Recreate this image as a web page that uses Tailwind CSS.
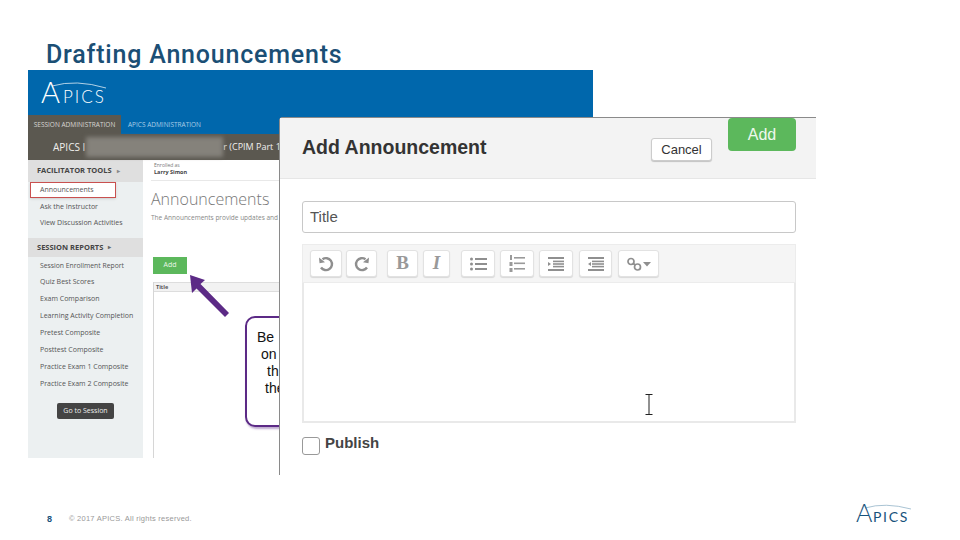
<!DOCTYPE html>
<html lang="en">

<head>
    <meta charset="UTF-8">
    <title>Drafting Announcements</title>
    <script src="https://cdn.jsdelivr.net/npm/@tailwindcss/browser@4"></script>
</head>

<body class="bg-white font-['Liberation_Sans',sans-serif]">
    <div class="relative w-[960px] h-[540px] overflow-hidden bg-white">
        <h1 class="absolute left-[46px] top-[40px] text-[25px] leading-[30px] font-medium tracking-[0.8px] text-[#1b4f75] font-['Roboto',sans-serif] whitespace-nowrap">Drafting Announcements</h1>

        <!-- facilitator page screenshot -->
        <div class="absolute left-[28px] top-[70px] w-[565px] h-[388px] flex flex-col bg-white font-['Open_Sans',sans-serif]">
            <div class="h-[45px] bg-[#0067ac] pl-[12px] pt-[3px] shrink-0">
                <svg width="72" height="40" viewBox="0 0 72 40" class="block">
                    <path d="M12 13 Q36 6 66 15" fill="none" stroke="#ffffff" stroke-width="0.7" />
                    <text x="1" y="30" font-family="Lato" font-weight="300" font-size="29" fill="#ffffff">A</text>
                    <text x="23" y="30" font-family="Lato" font-weight="300" font-size="17" letter-spacing="2" fill="#ffffff">PICS</text>
                </svg>
            </div>
            <div class="h-[19px] bg-[#0067ac] flex items-center shrink-0 text-[6.5px] text-[#c7d9e6]">
                <div class="h-full w-[93px] bg-[#5b5850] flex items-center justify-center text-[#d8d6d2]">SESSION ADMINISTRATION</div>
                <div class="pl-[7px] text-[#a9cde6]">APICS ADMINISTRATION</div>
            </div>
            <div class="h-[26px] bg-[#5b5850] flex items-center pl-[25px] shrink-0 text-[10px] text-[#f0efed]">
                <span>APICS I</span>
                <span class="w-[137px] h-[20px] bg-[#85827b] blur-[2px] ml-[1px]"></span>
                <span class="whitespace-nowrap text-[9px]">r (CPIM Part 1</span>
            </div>
            <div class="flex flex-1 min-h-0">
                <div class="w-[115px] bg-[#ecf0f1] shrink-0 flex flex-col text-[7px] text-[#555]">
                    <div class="h-[22px] bg-[#dfdfdf] flex items-center pl-[9px] text-[7.5px] font-bold text-[#444] whitespace-nowrap">FACILITATOR TOOLS <span class="ml-[5px] text-[6px] text-[#888]">▸</span></div>
                    <div class="mx-[2px] h-[16px] bg-white border border-[#c9504f] shadow-sm flex items-center pl-[9px] w-[86px]">Announcements</div>
                    <div class="h-[17px] flex items-center pl-[12px] pt-[1px]">Ask the Instructor</div>
                    <div class="h-[17px] flex items-center pl-[12px] whitespace-nowrap">View Discussion Activities</div>
                    <div class="h-[19px] mt-[6px] bg-[#dfdfdf] flex items-center pl-[9px] text-[7.5px] font-bold text-[#444] whitespace-nowrap">SESSION REPORTS <span class="ml-[5px] text-[6px] text-[#666]">▸</span></div>
                    <div class="h-[17px] flex items-center pl-[12px] whitespace-nowrap text-[6.8px] pt-[1px]">Session Enrollment Report</div>
                    <div class="h-[17px] flex items-center pl-[12px]">Quiz Best Scores</div>
                    <div class="h-[17px] flex items-center pl-[12px]">Exam Comparison</div>
                    <div class="h-[17px] flex items-center pl-[12px] whitespace-nowrap">Learning Activity Completion</div>
                    <div class="h-[17px] flex items-center pl-[12px]">Pretest Composite</div>
                    <div class="h-[17px] flex items-center pl-[12px]">Posttest Composite</div>
                    <div class="h-[17px] flex items-center pl-[12px] whitespace-nowrap">Practice Exam 1 Composite</div>
                    <div class="h-[17px] flex items-center pl-[12px] whitespace-nowrap">Practice Exam 2 Composite</div>
                    <div class="mt-[10px] ml-[29px] w-[57px] h-[16px] bg-[#444] rounded-[2px] text-[#eee] flex items-center justify-center">Go to Session</div>
                </div>
                <div class="flex-1 flex flex-col pl-[8px] min-w-0">
                    <div class="h-[21px] pt-[2px] border-b border-[#e8e8e8] text-[5px] leading-[7px] text-[#777] pl-[3px]">
                        <div>Enrolled as</div>
                        <div class="font-bold text-[#444] text-[5.5px]">Larry Simon</div>
                    </div>
                    <div class="pt-[8px] text-[16px] leading-[20px] font-light text-[#777]">Announcements</div>
                    <div class="text-[6.5px] leading-[10px] mt-[4px] text-[#888] whitespace-nowrap">The Announcements provide updates and i</div>
                    <div class="mt-[34px] ml-[2px] w-[34px] h-[17px] bg-[#5cb85c] text-[#e9f7e9] text-[7px] flex items-center justify-center">Add</div>
                    <div class="mt-[8px] ml-[2px] flex-1 border-l border-[#d6d6d6]">
                        <div class="h-[10px] bg-[#f2f2f2] border-y border-[#ddd] text-[5.5px] leading-[8px] font-bold text-[#555] pl-[2px]">Title</div>
                    </div>
                </div>
            </div>
        </div>

        <!-- arrow pointing at the Add button -->
        <svg class="absolute left-[185px] top-[270px]" width="50" height="50" viewBox="0 0 50 50">
            <path d="M5 5 L20 10 L15.5 14 L44 43 L40 47 L11.5 18.5 L7 23 Z" fill="#5c2a86" />
        </svg>

        <!-- callout behind the modal -->
        <div class="absolute left-[245px] top-[316px] w-[70px] h-[111px] bg-white border-2 border-[#5c2a86] rounded-[10px] shadow-[1px_2px_2px_rgba(92,42,134,0.4)] pt-[11px] text-[14px] leading-[17px] text-[#111] whitespace-nowrap">
            <div class="pl-[10px]">Be</div>
            <div class="pl-[14px]">on</div>
            <div class="pl-[20px]">th</div>
            <div class="pl-[18px]">the</div>
        </div>

        <!-- add announcement modal -->
        <div class="absolute left-[279px] top-[117px] w-[537px] h-[358px] bg-white border-l border-t border-[#8a8a8a] rounded-tl-[4px] flex flex-col">
            <div class="h-[61px] bg-[#f3f3f3] border-b border-[#e6e6e6] relative shrink-0 flex items-center pl-[22px]">
                <h2 class="text-[19.5px] font-bold text-[#333] whitespace-nowrap">Add Announcement</h2>
                <div class="absolute left-[371px] top-[20px] w-[61px] h-[23px] bg-white border border-[#ccc] rounded-[3px] shadow-[0_1px_1px_rgba(0,0,0,0.2)] text-[13px] text-[#333] flex items-center justify-center">Cancel</div>
                <div class="absolute left-[448px] top-[0px] w-[68px] h-[33px] bg-[#5cb85c] rounded-[4px] text-[16px] text-[#eef8ee] flex items-center justify-center">Add</div>
            </div>
            <div class="pl-[22px] w-[516px] pt-[22px] flex flex-col">
                <div class="h-[32px] border border-[#c8c8c8] rounded-[3px] flex items-center pl-[7px] text-[15px] text-[#555] shrink-0">Title</div>
                <div class="mt-[11px] h-[39px] bg-[#f5f5f5] border border-[#ececec] flex items-center pl-[7px] shrink-0 text-[#999]">
                    <div class="flex gap-[4px]">
                        <div class="w-[32px] h-[27px] bg-white border border-[#e2e2e2] rounded-[3px] shadow-[0_1px_1px_rgba(0,0,0,0.12)] flex items-center justify-center">
                            <svg width="18" height="16" viewBox="0 0 18 16" fill="none" stroke="#8f8f8f" stroke-width="2.4"><path d="M5.5 3.2 A6 6 0 1 1 4 11.5" /><path d="M2 1.5 L2.5 7.2 L8 6.2 Z" fill="#8f8f8f" stroke="none" /></svg>
                        </div>
                        <div class="w-[31px] h-[27px] bg-white border border-[#e2e2e2] rounded-[3px] shadow-[0_1px_1px_rgba(0,0,0,0.12)] flex items-center justify-center">
                            <svg width="18" height="16" viewBox="0 0 18 16" fill="none" stroke="#8f8f8f" stroke-width="2.4"><path d="M12.5 3.2 A6 6 0 1 0 14 11.5" /><path d="M16 1.5 L15.5 7.2 L10 6.2 Z" fill="#8f8f8f" stroke="none" /></svg>
                        </div>
                    </div>
                    <div class="flex gap-[5px] ml-[10px]">
                        <div class="w-[31px] h-[27px] bg-white border border-[#e2e2e2] rounded-[3px] shadow-[0_1px_1px_rgba(0,0,0,0.12)] flex items-center justify-center font-['Liberation_Serif',serif] font-bold text-[19px]">B</div>
                        <div class="w-[27px] h-[27px] bg-white border border-[#e2e2e2] rounded-[3px] shadow-[0_1px_1px_rgba(0,0,0,0.12)] flex items-center justify-center font-['Liberation_Serif',serif] font-bold italic text-[19px]">I</div>
                    </div>
                    <div class="flex gap-[5px] ml-[11px]">
                        <div class="w-[34px] h-[27px] bg-white border border-[#e2e2e2] rounded-[3px] shadow-[0_1px_1px_rgba(0,0,0,0.12)] flex items-center justify-center">
                            <svg width="17" height="14" viewBox="0 0 17 14" fill="#8f8f8f"><circle cx="1.5" cy="2" r="1.5" /><circle cx="1.5" cy="7" r="1.5" /><circle cx="1.5" cy="12" r="1.5" /><rect x="5" y="1" width="12" height="2" /><rect x="5" y="6" width="12" height="2" /><rect x="5" y="11" width="12" height="2" /></svg>
                        </div>
                        <div class="w-[34px] h-[27px] bg-white border border-[#e2e2e2] rounded-[3px] shadow-[0_1px_1px_rgba(0,0,0,0.12)] flex items-center justify-center">
                            <svg width="16" height="18" viewBox="0 0 16 18" fill="#9a9a9a"><rect x="1" y="0" width="2" height="5" /><rect x="0.5" y="7" width="3" height="4" /><rect x="0.5" y="13" width="3" height="4" /><rect x="5" y="2" width="11" height="1.6" /><rect x="5" y="7.5" width="11" height="1.6" /><rect x="5" y="13" width="11" height="1.6" /></svg>
                        </div>
                        <div class="w-[34px] h-[27px] bg-white border border-[#e2e2e2] rounded-[3px] shadow-[0_1px_1px_rgba(0,0,0,0.12)] flex items-center justify-center">
                            <svg width="16" height="14" viewBox="0 0 16 14" fill="#8f8f8f"><rect x="0" y="0" width="16" height="2" /><rect x="5" y="3.6" width="11" height="1.6" /><rect x="5" y="6.2" width="11" height="1.6" /><rect x="5" y="8.8" width="11" height="1.6" /><rect x="0" y="12" width="16" height="2" /><path d="M0 5 L3 7 L0 9 Z" /></svg>
                        </div>
                        <div class="w-[33px] h-[27px] bg-white border border-[#e2e2e2] rounded-[3px] shadow-[0_1px_1px_rgba(0,0,0,0.12)] flex items-center justify-center ml-[1px]">
                            <svg width="16" height="14" viewBox="0 0 16 14" fill="#8f8f8f"><rect x="0" y="0" width="16" height="2" /><rect x="4" y="3.6" width="12" height="1.6" /><rect x="4" y="6.2" width="12" height="1.6" /><rect x="4" y="8.8" width="12" height="1.6" /><rect x="0" y="12" width="16" height="2" /><path d="M3 5 L0 7 L3 9 Z" /></svg>
                        </div>
                    </div>
                    <div class="ml-[6px] w-[41px] h-[27px] bg-white border border-[#e2e2e2] rounded-[3px] shadow-[0_1px_1px_rgba(0,0,0,0.12)] flex items-center justify-center">
                        <svg width="24" height="14" viewBox="0 0 24 14" fill="none" stroke="#8f8f8f" stroke-width="1.7"><circle cx="4" cy="4.5" r="3" /><circle cx="10.5" cy="10" r="3" /><path d="M6.2 6.5 L8.4 8" /><path d="M16 5 L24 5 L20 9.5 Z" fill="#8f8f8f" stroke="none" /></svg>
                    </div>
                </div>
                <div class="h-[140px] border-2 border-t-0 border-[#e9e9e9] shrink-0"></div>
                <label class="mt-[12px] flex items-start gap-[5px]">
                    <span class="mt-[2px] w-[18px] h-[18px] border border-[#999] rounded-[3px] bg-white"></span>
                    <span class="text-[15px] leading-[15px] font-bold text-[#444]">Publish</span>
                </label>
            </div>
        </div>

        <!-- text cursor -->
        <svg class="absolute left-[644px] top-[394px]" width="10" height="21" viewBox="0 0 10 21" fill="none" stroke="#222" stroke-width="1"><path d="M1.5 .5 H8.5 M5 .5 V20.5 M1.5 20.5 H8.5" /></svg>

        <!-- slide footer -->
        <div class="absolute left-[46px] top-[512px] flex items-center text-[7.5px] leading-[14px] tracking-[0.25px] text-[#999]">
            <span class="w-[23px] pl-[1px] text-[9px] font-bold text-[#17527c]">8</span>
            <span>© 2017 APICS. All rights reserved.</span>
        </div>
        <svg class="absolute left-[855px] top-[495px]" width="58" height="34" viewBox="0 0 58 34">
            <path d="M10 13 Q30 7 56 14" fill="none" stroke="#6f9ab5" stroke-width="0.6" />
            <text x="1" y="27" font-family="Lato" font-weight="300" font-size="25" fill="#17527c">A</text>
            <text x="18" y="26.5" font-family="Lato" font-weight="400" font-size="14" letter-spacing="1.7" fill="#17527c">PICS</text>
        </svg>
    </div>
</body>

</html>
